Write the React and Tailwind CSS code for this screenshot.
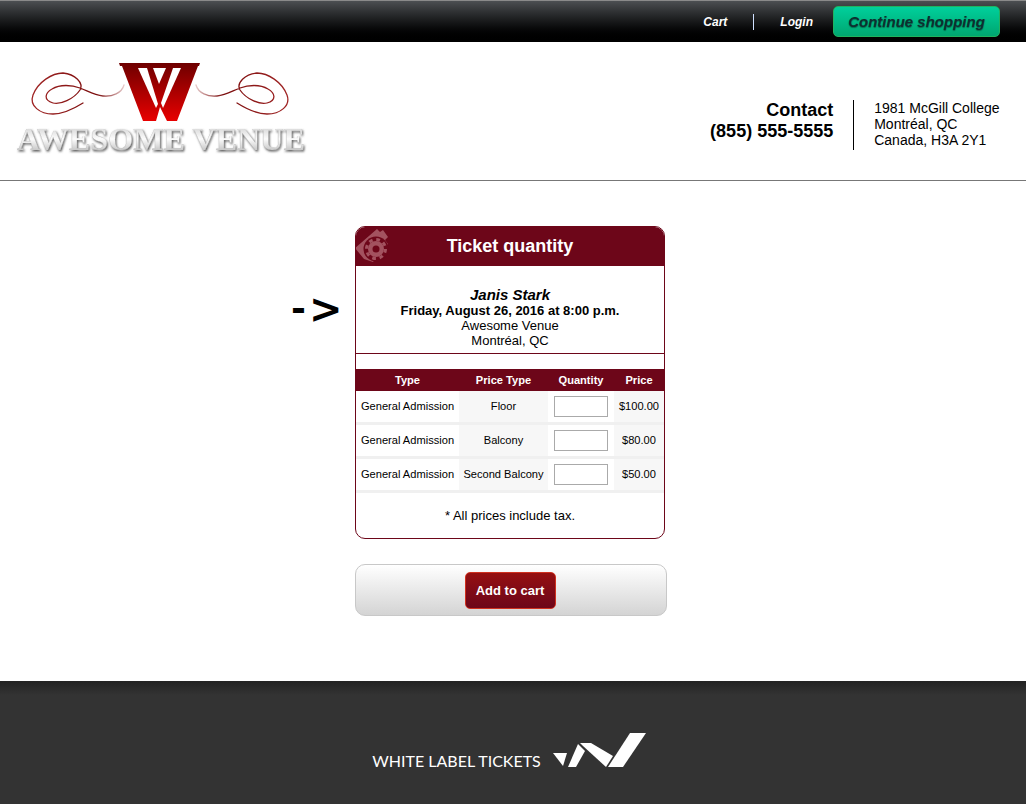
const font = { fontFamily: '"Liberation Sans", Arial, sans-serif' };

function Swirl() {
  return (
    <path
      d="M124 85 C122 93 112 97 103 96 C94 95 88 91 80 88 C72 85 60 84 52 89 C45 93 43 100 53 103 C60 105 74 99 80 90 C84 83 75 74 63 73 C52 73 38 82 33 95 C29 106 40 114 53 114 C63 114 75 108 83 103"
      fill="none"
      stroke="url(#swirl)"
      strokeWidth="1.3"
      strokeLinecap="round"
    />
  );
}

function VenueLogo() {
  return (
    <svg width="320" height="138" viewBox="0 0 320 138" className="block">
      <defs>
        <linearGradient id="wgrad" x1="0" y1="0" x2="0" y2="1">
          <stop offset="0" stopColor="#6e0000" />
          <stop offset="1" stopColor="#e80000" />
        </linearGradient>
        <linearGradient id="swirl" gradientUnits="userSpaceOnUse" x1="33" y1="0" x2="124" y2="0">
          <stop offset="0" stopColor="#a02525" />
          <stop offset="0.7" stopColor="#7a0c0c" />
          <stop offset="1" stopColor="#e6caca" />
        </linearGradient>
        <linearGradient id="tgrad" x1="0" y1="0" x2="0" y2="1">
          <stop offset="0" stopColor="#c4c4c4" />
          <stop offset="0.5" stopColor="#fcfcfc" />
          <stop offset="1" stopColor="#a8a8a8" />
        </linearGradient>
        <filter id="tshadow" x="-5%" y="-20%" width="110%" height="150%">
          <feDropShadow dx="1" dy="1.5" stdDeviation="0.8" floodColor="#555" />
        </filter>
      </defs>
      <g transform="translate(0,-42)">
        <polygon
          points="119,63 200,63 199,66 198,66 177,121 167,121 160,107 156,121 143,121 122,66 120,66"
          fill="url(#wgrad)"
        />
        <polygon points="138,68 147,68 158,104 156,108" fill="#fff" />
        <polygon points="153,68 166,68 159,84" fill="#fff" />
        <polygon points="173,68 181,68 163,108 161,103" fill="#fff" />
        <Swirl />
        <g transform="translate(320,0) scale(-1,1)">
          <Swirl />
        </g>
        <text
          x="17"
          y="150"
          textLength="288"
          lengthAdjust="spacingAndGlyphs"
          fontFamily='"Liberation Serif", serif'
          fontSize="32"
          fontWeight="700"
          fill="url(#tgrad)"
          stroke="#aaa"
          strokeWidth="0.2"
          filter="url(#tshadow)"
        >
          AWESOME VENUE
        </text>
      </g>
    </svg>
  );
}

function TicketGear() {
  return (
    <svg width="36" height="38" viewBox="0 0 36 38" className="absolute left-0 top-0">
      <polygon points="0,22 22,3 25,6 28,4 33,11 30,14 33,18 18,36 9,33" fill="#a3525f" />
      <circle cx="21" cy="23" r="12.5" fill="#6d0619" />
      <circle cx="21" cy="23" r="8" fill="#a3525f" />
      <circle cx="21" cy="23" r="9.5" fill="none" stroke="#a3525f" strokeWidth="3" strokeDasharray="3.7 3.76" />
      <circle cx="21" cy="23" r="3.5" fill="#6d0619" />
    </svg>
  );
}

function MarkLogo() {
  return (
    <svg width="96" height="36" viewBox="0 0 96 36" fill="#fff" className="block">
      <polygon points="1,20 15,20 11,33" />
      <polygon points="16,34 26,11 33,18 24,34" />
      <polygon points="28,10 39,10 61,23 54,34 31,13" />
      <polygon points="56,34 78,0 94,0 71,34" />
    </svg>
  );
}

const rows = [
  ["Floor", "$100.00"],
  ["Balcony", "$80.00"],
  ["Second Balcony", "$50.00"],
];

export default function App() {
  return (
    <div className="min-h-[804px] flex flex-col bg-white text-black" style={font}>
      <div className="h-[42px] flex items-center justify-end pr-[26px] border-t border-[#8a8a8a] bg-gradient-to-b from-[#4c4f52] to-black">
        <a className="w-[24px] text-center text-xs font-bold italic text-white">Cart</a>
        <span className="ml-[26px] h-[16px] w-px bg-[#cfe0ff]" />
        <a className="ml-[26px] text-xs font-bold italic text-white">Login</a>
        <button className="ml-[20px] h-[31px] w-[167px] pt-px rounded-[5px] border border-[#1fb35f] bg-gradient-to-b from-[#00d09c] to-[#00a670] text-[15px] font-bold italic text-[#0d2f30] [text-shadow:0_1px_1px_rgba(0,70,50,0.6)]">
          Continue shopping
        </button>
      </div>

      <header className="h-[139px] flex items-start justify-between border-b border-[#777]">
        <VenueLogo />
        <div className="flex mt-[58px] pr-[26.5px]">
          <div className="text-right text-lg leading-[21px] font-bold pr-[19.5px] border-r border-black h-[50px]">
            <div>Contact</div>
            <div>(855) 555-5555</div>
          </div>
          <div className="pl-[20.5px] text-sm leading-4">
            <div>1981 McGill College</div>
            <div>Montréal, QC</div>
            <div>Canada, H3A 2Y1</div>
          </div>
        </div>
      </header>

      <main className="flex-1 flex flex-col items-center pt-[45px] pb-[65px]">
        <div className="relative w-[312px] mr-[4px]">
          <div
            className="absolute left-[-64px] top-[58px] h-[50px] flex items-center gap-[3px] font-bold"
            style={{ fontFamily: '"DejaVu Sans", sans-serif' }}
          >
            <span className="text-[36px] leading-[50px]">-</span>
            <span className="text-[40px] leading-[50px]">&gt;</span>
          </div>
          <section className="w-[310px] h-[313px] rounded-[10px] border border-[#6d0619] overflow-hidden">
            <div className="relative -mx-px -mt-px h-[40px] flex items-center justify-center bg-[#6d0619] text-lg font-bold text-white">
              <TicketGear />
              <span className="relative">Ticket quantity</span>
            </div>
            <div className="h-[88px] pt-[21px] border-b border-[#6d0619] text-center text-[13px] leading-[15px]">
              <div className="text-[15px] leading-[16px] font-bold italic">Janis Stark</div>
              <div className="font-bold">Friday, August 26, 2016 at 8:00 p.m.</div>
              <div>Awesome Venue</div>
              <div>Montréal, QC</div>
            </div>
            <table className="mt-[15px] w-[308px] table-fixed border-separate border-spacing-0 text-[11.1px] text-center">
              <colgroup>
                <col className="w-[103px]" />
                <col className="w-[89px]" />
                <col className="w-[66px]" />
                <col className="w-[50px]" />
              </colgroup>
              <thead>
                <tr className="h-[22px] bg-[#6d0619] text-white font-bold">
                  <th>Type</th>
                  <th>Price Type</th>
                  <th>Quantity</th>
                  <th>Price</th>
                </tr>
              </thead>
              <tbody>
                {rows.map(([t, p]) => (
                  <tr key={t} className="h-[34px]">
                    <td className="border-b-[3px] border-[#f0f0f0]">General Admission</td>
                    <td className="border-b-[3px] border-[#f0f0f0] bg-[#f7f7f7]">{t}</td>
                    <td className="border-b-[3px] border-[#f0f0f0] align-middle">
                      <input className="block mx-auto h-[21px] w-[54px] border border-[#aaa] bg-white" />
                    </td>
                    <td className="border-b-[3px] border-[#f0f0f0] bg-[#f7f7f7]">{p}</td>
                  </tr>
                ))}
              </tbody>
            </table>
            <p className="mt-[15px] text-center text-[13px] leading-[15px]">* All prices include tax.</p>
          </section>

          <div className="mt-[25px] h-[52px] w-[312px] flex items-center justify-center pr-[2px] rounded-[10px] border border-[#c8c8c8] bg-gradient-to-b from-white to-[#d4d4d4]">
            <button className="h-[37px] w-[91px] pt-px rounded-[5px] border border-[#d0301f] bg-gradient-to-b from-[#951010] to-[#6d0619] text-[13px] font-bold text-white">
              Add to cart
            </button>
          </div>
        </div>
      </main>

      <footer className="h-[123px] pt-[51px] flex items-start justify-center bg-[#333] bg-gradient-to-b from-[#222] to-[#333] to-[14px]">
        <div className="flex items-start mr-[6px]">
          <span className="mt-[19px] text-base text-white leading-[20px]" style={{ fontFamily: 'Lato, sans-serif' }}>
            WHITE LABEL TICKETS
          </span>
          <span className="ml-[11px] mt-px">
            <MarkLogo />
          </span>
        </div>
      </footer>
    </div>
  );
}
